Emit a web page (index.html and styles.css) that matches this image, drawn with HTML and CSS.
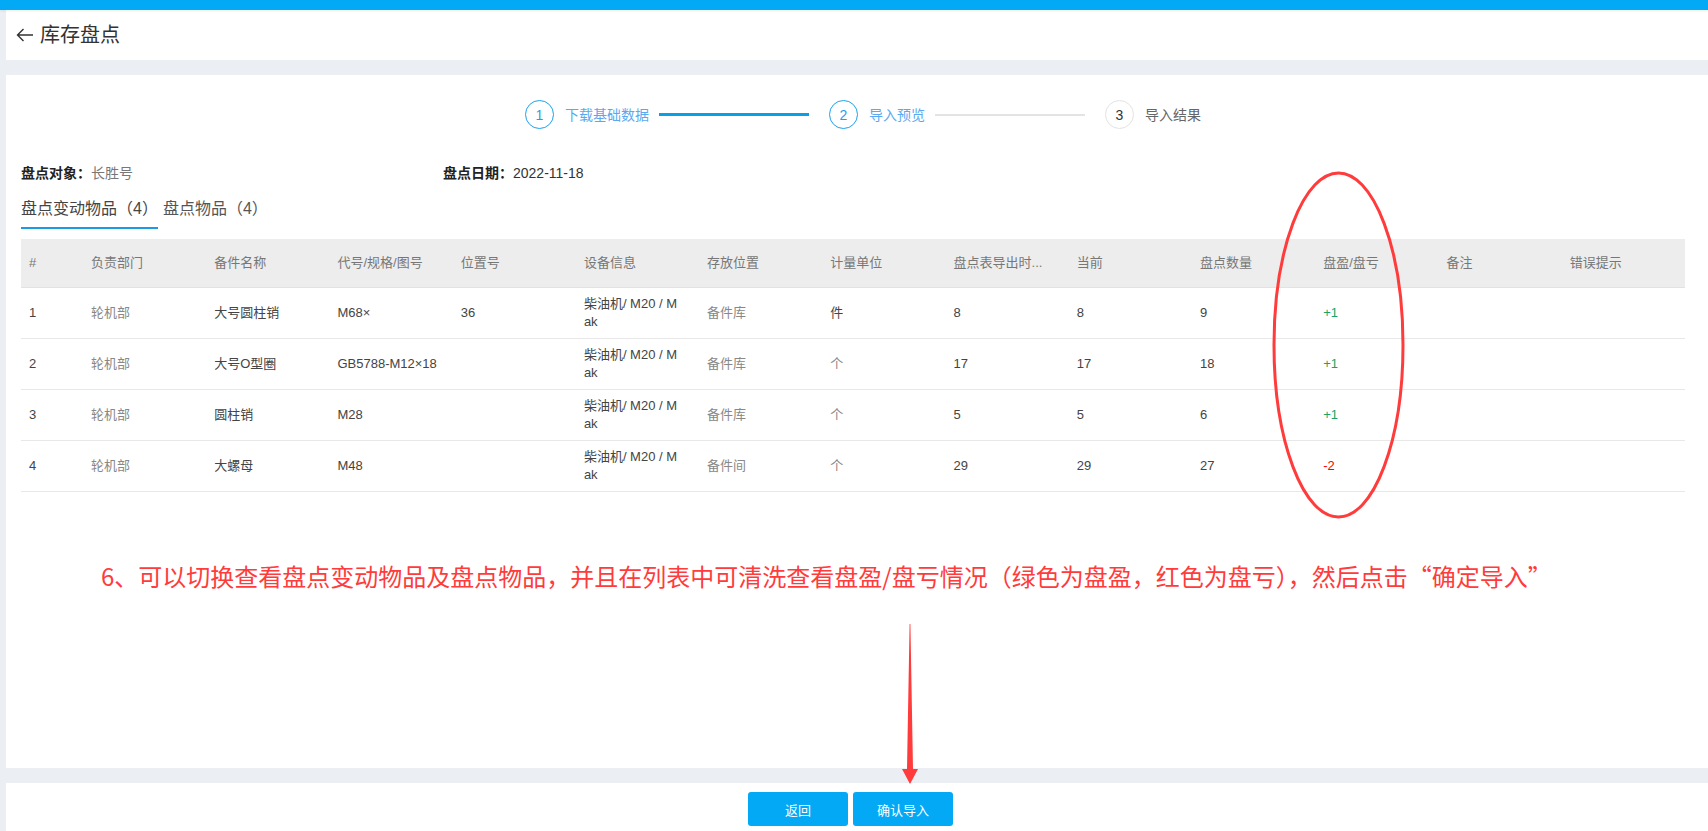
FILE: index.html
```html
<!DOCTYPE html>
<html lang="zh-CN">
<head>
<meta charset="utf-8">
<title>库存盘点</title>
<link rel="stylesheet" href="styles.css">
</head>
<body>
<div class="topbar"></div>
<div class="main">
  <header class="page-header">
    <svg class="back-icon" width="18" height="14" viewBox="0 0 18 14"><path d="M17 7H1.5M7.5 1L1.5 7l6 6" fill="none" stroke="#333" stroke-width="1.4"/></svg>
    <h1 class="title">库存盘点</h1>
  </header>
  <section class="content">
    <div class="steps">
      <div class="step done"><span class="step-num">1</span><span class="step-label">下载基础数据</span><span class="step-line"></span></div>
      <div class="step active"><span class="step-num">2</span><span class="step-label">导入预览</span><span class="step-line"></span></div>
      <div class="step wait"><span class="step-num">3</span><span class="step-label">导入结果</span></div>
    </div>
    <div class="info">
      <div class="info-item"><span class="info-label">盘点对象：</span><span class="info-muted">长胜号</span></div>
      <div class="info-item"><span class="info-label">盘点日期：</span><span class="info-value">2022-11-18</span></div>
    </div>
    <div class="tabs">
      <div class="tab active">盘点变动物品（4）</div>
      <div class="tab">盘点物品（4）</div>
    </div>
    <table class="grid">
      <colgroup><col class="col-idx"><col><col><col><col><col><col><col><col><col><col><col><col><col></colgroup>
      <thead>
        <tr><th>#</th><th>负责部门</th><th>备件名称</th><th>代号/规格/图号</th><th>位置号</th><th>设备信息</th><th>存放位置</th><th>计量单位</th><th title="盘点表导出时库存数量">盘点表导出时...</th><th>当前</th><th>盘点数量</th><th>盘盈/盘亏</th><th>备注</th><th>错误提示</th></tr>
      </thead>
      <tbody>
        <tr><td>1</td><td class="dim">轮机部</td><td>大号圆柱销</td><td>M68×</td><td>36</td><td>柴油机/ M20 / Mak</td><td class="dim">备件库</td><td>件</td><td>8</td><td>8</td><td>9</td><td class="gain">+1</td><td></td><td></td></tr>
        <tr><td>2</td><td class="dim">轮机部</td><td>大号O型圈</td><td>GB5788-M12×18</td><td></td><td>柴油机/ M20 / Mak</td><td class="dim">备件库</td><td class="dim">个</td><td>17</td><td>17</td><td>18</td><td class="gain">+1</td><td></td><td></td></tr>
        <tr><td>3</td><td class="dim">轮机部</td><td>圆柱销</td><td>M28</td><td></td><td>柴油机/ M20 / Mak</td><td class="dim">备件库</td><td class="dim">个</td><td>5</td><td>5</td><td>6</td><td class="gain">+1</td><td></td><td></td></tr>
        <tr><td>4</td><td class="dim">轮机部</td><td>大螺母</td><td>M48</td><td></td><td>柴油机/ M20 / Mak</td><td class="dim">备件间</td><td class="dim">个</td><td>29</td><td>29</td><td>27</td><td class="loss">-2</td><td></td><td></td></tr>
      </tbody>
    </table>
    <p class="note">6、可以切换查看盘点变动物品及盘点物品，并且在列表中可清洗查看盘盈/盘亏情况（绿色为盘盈，红色为盘亏），然后点击“确定导入”</p>
  </section>
  <footer class="footer">
    <button class="btn">返回</button>
    <button class="btn">确认导入</button>
  </footer>
</div>
<svg class="mark-ellipse" width="133" height="348" viewBox="0 0 133 348"><ellipse cx="66.5" cy="174" rx="64.5" ry="172" fill="none" stroke="#ff3b3b" stroke-width="3"/></svg>
<svg class="mark-arrow" width="16" height="160" viewBox="0 0 16 160"><path d="M7.6 0h0.8L11 145h5L8 160 0 145h5z" fill="#ff3b3b"/></svg>
</body>
</html>
```

FILE: styles.css
```css
* { box-sizing: border-box; }
html, body { margin: 0; padding: 0; }
body {
  background: #ebeef2;
  font-family: "Liberation Sans", "Noto Sans CJK SC", sans-serif;
  color: #333;
  font-size: 13px;
  position: relative;
  height: 831px;
  overflow: hidden;
}
.topbar {
  height: 10px;
  background: #03a9f4;
  box-shadow: 0 1px 3px rgba(0,0,0,0.08);
  position: relative;
  z-index: 1;
}
.main {
  margin-left: 6px;
  display: flex;
  flex-direction: column;
}
.page-header {
  height: 50px;
  background: #fff;
  display: flex;
  align-items: center;
  padding-left: 10px;
}
.back-icon { display: block; margin-right: 6px; }
.title {
  margin: 0;
  font-size: 20px;
  font-weight: 400;
  line-height: 24px;
  color: #333;
}
.content {
  margin-top: 15px;
  height: 693px;
  background: #fff;
  padding: 25px 23px 0 15px;
}
.steps {
  display: flex;
  justify-content: center;
  padding-left: 20px;
  height: 29px;
}
.step { display: flex; align-items: center; }
.step-num {
  width: 29px;
  height: 29px;
  border-radius: 50%;
  border: 1px solid #e3e3e3;
  display: flex;
  align-items: center;
  justify-content: center;
  font-size: 14px;
  color: #333;
  margin-right: 11px;
}
.step-label { font-size: 14px; line-height: 20px; color: #666; }
.step-line {
  width: 150px;
  height: 2px;
  background: #e3e3e3;
  margin-left: 10px;
  margin-right: 20px;
}
.step.done .step-num, .step.active .step-num { border-color: #1ea1ea; color: #1ea1ea; }
.step.done .step-label, .step.active .step-label { color: #5aa9f0; }
.step.done .step-line { background: #0aa0e8; height: 3px; }
.info {
  margin-top: 34px;
  display: grid;
  grid-template-columns: 422px 1fr;
  font-size: 14px;
  line-height: 20px;
}
.info-label { font-weight: 700; color: #222; }
.info-muted { color: #777; }
.info-value { color: #333; }
.tabs {
  margin-top: 15px;
  display: flex;
  gap: 5px;
}
.tab {
  font-size: 16px;
  line-height: 22px;
  padding-bottom: 7px;
  color: #555;
  border-bottom: 2px solid transparent;
}
.tab.active { border-bottom-color: #1b9be2; color: #444; }
.grid {
  margin-top: 10px;
  width: 1664px;
  table-layout: fixed;
  border-collapse: collapse;
  font-size: 13px;
}
.col-idx { width: 62px; }
.grid th {
  background: #ededed;
  font-weight: 400;
  color: #777;
  text-align: left;
  padding: 15px 8px 15px 8px;
  line-height: 18px;
  border-bottom: 1px solid #e0e3e6;
  white-space: nowrap;
}
.grid td {
  padding: 7px 15px 7px 8px;
  line-height: 18px;
  height: 51px;
  border-bottom: 1px solid #e8e8e8;
  color: #444;
  word-break: break-all;
  vertical-align: middle;
}
.grid td.dim { color: #888; }
.grid td.gain { color: #19a463; }
.grid td.loss { color: #f00; }
.note {
  margin: 68px 0 0 80px;
  font-family: "Noto Sans CJK SC", sans-serif;
  font-size: 24px;
  line-height: 32px;
  color: #ff3b3b;
  white-space: nowrap;
}
.footer {
  margin-top: 15px;
  height: 60px;
  background: #fff;
  display: flex;
  justify-content: center;
  align-items: flex-start;
  gap: 5px;
  padding-top: 9px;
  padding-right: 13px;
}
.btn {
  width: 100px;
  height: 34px;
  border: none;
  border-radius: 3px;
  background: #03a9f4;
  color: #fff;
  font-family: inherit;
  font-size: 13px;
}
.mark-ellipse { position: absolute; left: 1272px; top: 171px; }
.mark-arrow { position: absolute; left: 902px; top: 624px; }
```
